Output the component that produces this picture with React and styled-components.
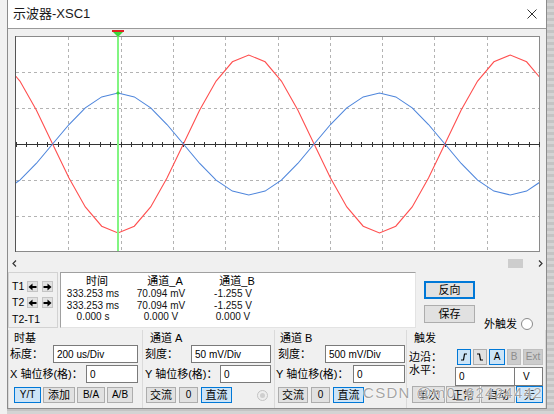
import React from 'react';
import styled, { createGlobalStyle } from 'styled-components';

const GlobalStyle = createGlobalStyle`
  html, body { margin: 0; padding: 0; }
  body {
    background: #d6d6d6;
    font-family: "Liberation Sans", "Noto Sans CJK SC", sans-serif;
    color: #000;
  }
`;

const Desktop = styled.div`
  position: relative;
  width: 554px;
  height: 414px;
  overflow: hidden;
  box-sizing: border-box;
  padding-left: 7px;
  background:
    linear-gradient(to right, #f1f1f1 0 7px, transparent 7px),
    repeating-linear-gradient(to bottom, #c4c4c4 0 3px, #d4d4d4 3px 6px);
`;

const Window = styled.div`
  width: 540px;
  box-sizing: border-box;
  background: #f0f0f0;
  border: 1px solid #8c8c8c;
  border-top: none;
  display: flex;
  flex-direction: column;
`;

const TitleBar = styled.div`
  height: 28px;
  background: #fff;
  border-bottom: 1px solid #9a9a9a;
  display: flex;
  align-items: center;
  justify-content: space-between;
  padding: 0 9px 0 5px;
`;

const Title = styled.span`
  font-size: 13px;
  line-height: 16px;
  color: #1a1a1a;
`;

const ScopeSvg = styled.svg`
  display: block;
`;

const ScrollRow = styled.div`
  height: 18px;
  box-sizing: border-box;
  padding: 5px 3px 0 4px;
  display: flex;
  align-items: center;
`;

const Thumb = styled.div`
  width: 15px;
  height: 9px;
  margin-left: auto;
  margin-right: 15px;
  background: #cdcdcd;
`;

const ReadoutRow = styled.div`
  height: 60px;
  box-sizing: border-box;
  padding-top: 2px;
  display: flex;
  align-items: flex-start;
`;

const CursorBox = styled.div`
  width: 50px;
  height: 56px;
  box-sizing: border-box;
  border: 1px solid #d2d2d2;
  padding: 8px 0 0 3px;
  display: flex;
  flex-direction: column;
  font-size: 10.5px;
`;

const CursorRow = styled.div`
  display: flex;
  align-items: center;
  height: 11px;
  margin-bottom: ${p => p.$mb || 0}px;
`;

const CursorName = styled.span`
  width: ${p => p.$w || 18}px;
  line-height: 11px;
`;

const ArrowBtn = styled.div`
  width: 11px;
  height: 11px;
  box-sizing: border-box;
  margin-right: 4px;
  background: #e1e1e1;
  border: 1px solid #c4c4c4;
  display: flex;
  align-items: center;
  justify-content: center;
`;

const Table = styled.div`
  width: 356px;
  height: 56px;
  margin-left: 2px;
  box-sizing: border-box;
  background: #fff;
  border-top: 1px solid #a0a0a0;
  border-left: 1px solid #a0a0a0;
  border-right: 1px solid #e3e3e3;
  border-bottom: 1px solid #e3e3e3;
  padding-top: 2px;
  display: grid;
  grid-template-columns: 64px 72px 72px;
  grid-auto-rows: 11.5px;
  grid-template-rows: 13px;
`;

const Head = styled.div`
  font-size: 11px;
  line-height: 13px;
  text-align: center;
  padding-left: 8px;
`;

const Cell = styled.div`
  font-size: 10px;
  line-height: 11.5px;
  text-align: center;
  color: #111;
`;

const SideButtons = styled.div`
  margin: 9px 0 0 8px;
  display: flex;
  flex-direction: column;
  gap: 6px;
`;

const ExtTrigger = styled.div`
  margin: 46px 0 0 9px;
  display: flex;
  align-items: center;
  gap: 4px;
  font-size: 11px;
  line-height: 12px;
`;

const Radio = styled.div`
  width: ${p => p.$size}px;
  height: ${p => p.$size}px;
  box-sizing: border-box;
  border-radius: 50%;
  border: 1px solid ${p => (p.$off ? '#c4c4c4' : '#8a8a8a')};
  background: ${p => (p.$off ? '#eeeeee' : '#fff')};
  display: flex;
  align-items: center;
  justify-content: center;
  flex: none;
  &::after {
    content: '';
    display: ${p => (p.$dot ? 'block' : 'none')};
    width: 5px;
    height: 5px;
    border-radius: 50%;
    background: #cfcfcf;
  }
`;

const Btn = styled.div`
  box-sizing: border-box;
  width: ${p => p.$w}px;
  height: ${p => p.$h || 16}px;
  flex: none;
  display: flex;
  align-items: center;
  justify-content: center;
  border: 1px solid ${p => (p.$on || p.$focus ? '#0078d7' : p.$off ? '#bfbfbf' : '#adadad')};
  box-shadow: ${p => (p.$focus ? 'inset 0 0 0 1px #0078d7' : 'none')};
  background: ${p => (p.$on ? '#cce4f7' : p.$off ? '#cccccc' : '#e1e1e1')};
  color: ${p => (p.$off ? '#8d8d8d' : '#000')};
  font-size: ${p => p.$fs || 11}px;
  line-height: 12px;
`;

const Controls = styled.div`
  height: 78px;
  display: flex;
`;

const Group = styled.div`
  width: ${p => p.$w}px;
  box-sizing: border-box;
  border-left: ${p => (p.$first ? '1px solid #dadada' : 'none')};
  border-right: 1px solid #dadada;
  padding: 2px ${p => p.$pr}px 0 ${p => p.$pl}px;
  display: flex;
  flex-direction: column;
`;

const Legend = styled.div`
  font-size: 11px;
  line-height: 12px;
  height: 12px;
  padding-left: ${p => p.$indent}px;
  margin-bottom: ${p => p.$mb}px;
`;

const FieldRow = styled.div`
  display: flex;
  align-items: ${p => (p.$top ? 'flex-start' : 'center')};
  justify-content: space-between;
  height: ${p => p.$h || 18}px;
  margin-bottom: ${p => p.$mb || 0}px;
`;

const FieldLabel = styled.span`
  font-size: 11px;
  line-height: 12px;
  white-space: nowrap;
  margin-top: ${p => p.$mt || 0}px;
  margin-left: ${p => p.$ml || 0}px;
`;

const Input = styled.div`
  width: ${p => p.$w}px;
  height: ${p => p.$h || 18}px;
  box-sizing: border-box;
  flex: none;
  background: #fff;
  border: 1px solid #7a7a7a;
  border-left-width: ${p => (p.$joined ? 0 : 1)}px;
  padding-left: ${p => (p.$joined ? 8 : 3)}px;
  display: flex;
  align-items: center;
  font-size: 10px;
`;

const ButtonRow = styled.div`
  display: flex;
  align-items: center;
  gap: ${p => p.$gap}px;
  padding-left: ${p => p.$pl || 0}px;
  height: ${p => p.$h || 16}px;
`;

const Joined = styled.div`
  display: flex;
  margin-left: auto;
  margin-right: ${p => p.$mr || 0}px;
`;

const Watermark = styled.div`
  position: absolute;
  left: 363px;
  top: 384px;
  font-size: 15px;
  letter-spacing: 1.3px;
  color: rgba(128, 128, 128, 0.72);
  text-shadow: 0 0 1px #fff, 0 0 2px #fff;
  white-space: nowrap;
  pointer-events: none;
`;

const PERIOD = 261.5;

const wave = (amp, sign) => {
  const pts = [];
  const step = PERIOD / 16;
  for (let x = 118 - step * 7; x <= 550; x += step) {
    const y = 144 + sign * amp * Math.cos((2 * Math.PI * (x - 118)) / PERIOD);
    pts.push(`${x.toFixed(1)},${y.toFixed(1)}`);
  }
  return pts.join(' ');
};

const Scope = () => {
  const gx = Array.from({ length: 9 }, (_, i) => Math.round(16 + 52.3 * (i + 1)) + 0.5);
  const gy = [72.5, 108.5, 180.5, 216.5];
  const ticks = Array.from({ length: 51 }, (_, i) => Math.round(16 + 10.46 * i) + 0.5);
  return (
    <ScopeSvg width="538" height="223" viewBox="8 29 538 223">
      <defs>
        <clipPath id="plotClip">
          <rect x="16" y="37" width="523" height="214" />
        </clipPath>
      </defs>
      <rect x="15.5" y="36.5" width="524" height="215" fill="#fff" stroke="#8a8a8a" />
      <line x1="15.5" x2="15.5" y1="36" y2="252" stroke="#555" />
      {gx.map(x => (
        <line key={x} x1={x} x2={x} y1="37" y2="251" stroke="#b3b3b3" strokeDasharray="3 3" />
      ))}
      {gy.map(y => (
        <line key={y} x1="16" x2="539" y1={y} y2={y} stroke="#b3b3b3" strokeDasharray="3 3" />
      ))}
      <line x1="16" x2="539" y1="144.5" y2="144.5" stroke="#333" />
      {ticks.map(x => (
        <line key={x} x1={x} x2={x} y1="142" y2="147" stroke="#333" />
      ))}
      <g clipPath="url(#plotClip)" fill="none" strokeWidth="1.1">
        <polyline points={wave(89, 1)} stroke="#ff4f4f" />
        <polyline points={wave(51, -1)} stroke="#4f86dc" />
      </g>
      <line x1="118" x2="118" y1="36" y2="251" stroke="#82f582" strokeWidth="2" />
      <rect x="112" y="30" width="12" height="2" fill="#e02020" />
      <polygon points="113,32 123,32 118,37" fill="#3cd43c" />
      <circle cx="118" cy="93" r="1.6" fill="#3cd43c" />
    </ScopeSvg>
  );
};

const Chevron = ({ dir }) => (
  <svg width="5" height="7" viewBox="0 0 5 7">
    <polyline
      points={dir === 'left' ? '4,0.5 1,3.5 4,6.5' : '1,0.5 4,3.5 1,6.5'}
      fill="none"
      stroke="#333"
      strokeWidth="1.2"
    />
  </svg>
);

const Arrow = ({ dir }) => (
  <svg width="9" height="8" viewBox="0 0 9 8">
    <g transform={dir === 'right' ? 'translate(9,0) scale(-1,1)' : undefined} fill="#000">
      <polygon points="0.5,4 4.5,0.5 4.5,7.5" />
      <rect x="4" y="3" width="4.5" height="2" />
    </g>
  </svg>
);

const EdgeIcon = ({ falling }) => (
  <svg width="10" height="10" viewBox="0 0 10 10">
    <polyline
      points={falling ? '2,2 4.5,2 5.5,8 8,8' : '2,8 4.5,8 5.5,2 8,2'}
      fill="none"
      stroke="#000"
      strokeWidth="1.2"
    />
  </svg>
);

const CloseIcon = () => (
  <svg width="10" height="10" viewBox="0 0 10 10">
    <path d="M0.5 0.5 L9.5 9.5 M9.5 0.5 L0.5 9.5" stroke="#333" strokeWidth="1" />
  </svg>
);

const readout = [
  ['333.253 ms', '70.094 mV', '-1.255 V'],
  ['333.253 ms', '70.094 mV', '-1.255 V'],
  ['0.000 s', '0.000 V', '0.000 V'],
];

export default function App() {
  return (
    <>
      <GlobalStyle />
      <Desktop>
        <Window>
          <TitleBar>
            <Title>示波器-XSC1</Title>
            <CloseIcon />
          </TitleBar>

          <Scope />

          <ScrollRow>
            <Chevron dir="left" />
            <Thumb />
            <Chevron dir="right" />
          </ScrollRow>

          <ReadoutRow>
            <CursorBox>
              <CursorRow $mb={5}>
                <CursorName>T1</CursorName>
                <ArrowBtn><Arrow dir="left" /></ArrowBtn>
                <ArrowBtn><Arrow dir="right" /></ArrowBtn>
              </CursorRow>
              <CursorRow $mb={6}>
                <CursorName>T2</CursorName>
                <ArrowBtn><Arrow dir="left" /></ArrowBtn>
                <ArrowBtn><Arrow dir="right" /></ArrowBtn>
              </CursorRow>
              <CursorRow>
                <CursorName $w={40}>T2-T1</CursorName>
              </CursorRow>
            </CursorBox>

            <Table>
              <Head>时间</Head>
              <Head>通道_A</Head>
              <Head>通道_B</Head>
              {readout.flat().map((v, i) => (
                <Cell key={i}>{v}</Cell>
              ))}
            </Table>

            <SideButtons>
              <Btn $w={51} $h={18} $focus>反向</Btn>
              <Btn $w={51} $h={18}>保存</Btn>
            </SideButtons>

            <ExtTrigger>
              外触发
              <Radio $size={12} />
            </ExtTrigger>
          </ReadoutRow>

          <Controls>
            <Group $w={135} $pl={1} $pr={4} $first>
              <Legend $indent={4} $mb={1}>时基</Legend>
              <FieldRow $mb={2}>
                <FieldLabel>标度：</FieldLabel>
                <Input $w={85}>200 us/Div</Input>
              </FieldRow>
              <FieldRow $mb={4}>
                <FieldLabel>X 轴位移(格)：</FieldLabel>
                <Input $w={52}>0</Input>
              </FieldRow>
              <ButtonRow $gap={2} $pl={4}>
                <Btn $w={27} $on $fs={10}>Y/T</Btn>
                <Btn $w={32}>添加</Btn>
                <Btn $w={28} $fs={10}>B/A</Btn>
                <Btn $w={26} $fs={10}>A/B</Btn>
              </ButtonRow>
            </Group>

            <Group $w={132} $pl={2} $pr={3}>
              <Legend $indent={5} $mb={1}>通道 A</Legend>
              <FieldRow $mb={2}>
                <FieldLabel>刻度：</FieldLabel>
                <Input $w={80}>50 mV/Div</Input>
              </FieldRow>
              <FieldRow $mb={4}>
                <FieldLabel>Y 轴位移(格)：</FieldLabel>
                <Input $w={51}>0</Input>
              </FieldRow>
              <ButtonRow $gap={3} $pl={1}>
                <Btn $w={30}>交流</Btn>
                <Btn $w={19} $fs={10}>0</Btn>
                <Btn $w={31} $on>直流</Btn>
                <Joined $mr={3}>
                  <Radio $size={11} $off $dot />
                </Joined>
              </ButtonRow>
            </Group>

            <Group $w={132} $pl={1} $pr={1}>
              <Legend $indent={4} $mb={1}>通道 B</Legend>
              <FieldRow $mb={2}>
                <FieldLabel $ml={2}>刻度：</FieldLabel>
                <Input $w={80}>500 mV/Div</Input>
              </FieldRow>
              <FieldRow $mb={4}>
                <FieldLabel>Y 轴位移(格)：</FieldLabel>
                <Input $w={52}>0</Input>
              </FieldRow>
              <ButtonRow $gap={3} $pl={2}>
                <Btn $w={30}>交流</Btn>
                <Btn $w={19} $fs={10}>0</Btn>
                <Btn $w={31} $on>直流</Btn>
              </ButtonRow>
            </Group>

            <Group $w={139} $pl={2} $pr={2}>
              <Legend $indent={5} $mb={5}>触发</Legend>
              <FieldRow $h={16} $mb={2}>
                <FieldLabel>边沿：</FieldLabel>
                <ButtonRow $gap={2}>
                  <Btn $w={14} $on><EdgeIcon /></Btn>
                  <Btn $w={14}><EdgeIcon falling /></Btn>
                  <Btn $w={16} $on $fs={10}>A</Btn>
                  <Btn $w={14} $off $fs={10}>B</Btn>
                  <Btn $w={20} $off $fs={10}>Ext</Btn>
                </ButtonRow>
              </FieldRow>
              <FieldRow $h={19} $top>
                <FieldLabel $mt={-3}>水平：</FieldLabel>
                <Joined>
                  <Input $w={60} $h={19}>0</Input>
                  <Input $w={28} $h={19} $joined>V</Input>
                </Joined>
              </FieldRow>
              <ButtonRow $gap={1} $h={17} $pl={3}>
                <Btn $w={33} $h={17}>单次</Btn>
                <Btn $w={34} $h={17}>正常</Btn>
                <Btn $w={34} $h={17}>自动</Btn>
                <Btn $w={27} $h={17} $on>无</Btn>
              </ButtonRow>
            </Group>
          </Controls>
        </Window>
        <Watermark>CSDN @m0_62424442</Watermark>
      </Desktop>
    </>
  );
}
